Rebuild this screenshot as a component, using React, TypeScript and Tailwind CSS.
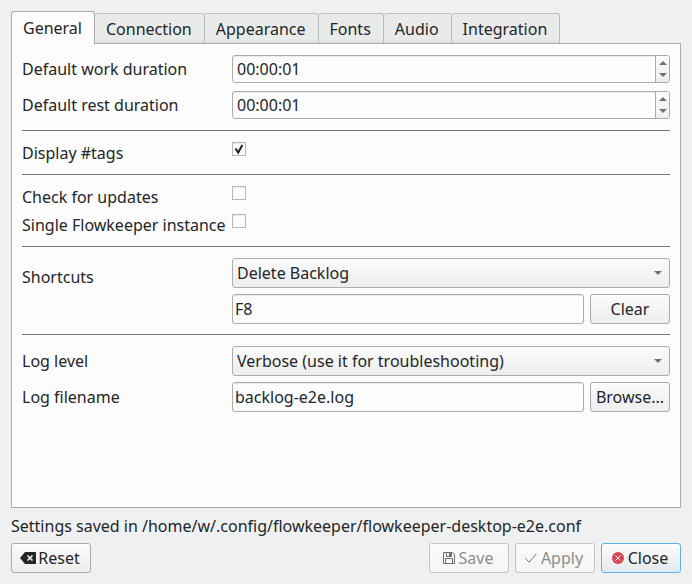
import { useState, type ReactNode } from "react";

const tabs = ["General", "Connection", "Appearance", "Fonts", "Audio", "Integration"];

const raised = "rounded-[3px] border bg-linear-to-b ";
const buttonBase = raised + "flex h-[30px] w-20 items-center justify-center whitespace-nowrap ";
const normalButton = buttonBase + "border-[#a9abac] from-[#fcfcfc] to-[#ededed]";
const disabledButton = buttonBase + "gap-1 border-[#c2c4c5] from-[#fbfbfb] to-[#f4f5f5] pr-0.5 text-[#8b8d8f]";
const textBox =
  "h-[30px] w-full min-w-0 flex-1 rounded-[3px] border border-[#a9abac] bg-[#fcfcfc] px-0.5 shadow-[inset_0_1px_0_#ececec] outline-none";

function Row({ id, label, children }: { id: string; label: string; children: ReactNode }) {
  return (
    <div className="flex h-[30px] items-center">
      <label htmlFor={id} className="w-[210px] shrink-0">{label}</label>
      <div className="flex min-w-0 flex-1 gap-1.5">{children}</div>
    </div>
  );
}

function Divider() {
  return <hr className="mt-1 mb-[5px] border-t border-[#747677]" />;
}

function Duration({ id, label }: { id: string; label: string }) {
  return (
    <Row id={id} label={label}>
      <div className="flex h-7 flex-1 overflow-hidden rounded-[3px] border border-[#a9abac] bg-[#fcfcfc] shadow-[inset_0_1px_0_#ececec]">
        <input id={id} defaultValue="00:00:01" className="min-w-0 flex-1 bg-transparent px-1 outline-none" />
        <div className="flex w-[14px] flex-col border-l border-[#a9abac] bg-linear-to-b from-[#fcfcfc] to-[#ededed] py-px">
          <button aria-label={label + " up"} className="flex flex-1 items-center justify-center">
            <svg width="8" height="4" viewBox="0 0 8 4" fill="#6f7173"><path d="M0 4 4 0l4 4z" /></svg>
          </button>
          <button aria-label={label + " down"} className="flex flex-1 items-center justify-center">
            <svg width="8" height="4" viewBox="0 0 8 4" fill="#6f7173"><path d="M0 0h8L4 4z" /></svg>
          </button>
        </div>
      </div>
    </Row>
  );
}

function Check({ id, label, initial = false }: { id: string; label: string; initial?: boolean }) {
  const [on, setOn] = useState(initial);
  return (
    <div className="flex h-[22px] items-start">
      <label htmlFor={id} className="w-[210px] shrink-0 whitespace-nowrap">{label}</label>
      <span className="relative h-3.5 w-3.5">
        <input
          id={id}
          type="checkbox"
          checked={on}
          onChange={(e) => setOn(e.target.checked)}
          className="block h-3.5 w-3.5 appearance-none border border-[#b7b8b9] bg-[#fcfcfc] shadow-[inset_0_1px_0_#ececec]"
        />
        {on && (
          <svg className="pointer-events-none absolute inset-0" width="14" height="14" viewBox="0 0 14 14" fill="none" stroke="#1b1e20" strokeWidth="2">
            <path d="M3.5 6.5 6.2 10.6 10.3 3" />
          </svg>
        )}
      </span>
    </div>
  );
}

function Dropdown({ id, value }: { id: string; value: string }) {
  return (
    <div className="relative flex-1">
      <select id={id} className={raised + "block h-[30px] w-full appearance-none border-[#a9abac] from-[#fcfcfc] to-[#ededed] pr-6 pl-1 outline-none"}>
        <option>{value}</option>
      </select>
      <svg className="pointer-events-none absolute top-[13px] right-2" width="8" height="4" viewBox="0 0 8 4" fill="#6f7173">
        <path d="M0 0h8L4 4z" />
      </svg>
    </div>
  );
}

export default function App() {
  return (
    <div className="flex min-h-screen flex-col bg-[#eff0f1] p-[11px] font-['Noto_Sans',sans-serif] text-[16px] leading-[22px] text-[#232627]">
      <div role="tablist" className="flex items-end">
        {tabs.map((tab, i) =>
          i === 0 ? (
            <button key={tab} role="tab" aria-selected="true" className="relative z-10 -mb-px h-[33px] rounded-t-[3px] border border-b-0 border-[#a9abac] bg-[#fcfcfc] pr-3 pl-[11px]">
              {tab}
            </button>
          ) : (
            <button key={tab} role="tab" aria-selected="false" className="h-[30px] rounded-t-[3px] border-t border-r border-[#bbbdbe] bg-linear-to-b from-[#e9ebeb] from-85% to-[#dfe1e1] pr-3 pl-[11px]">
              {tab}
            </button>
          )
        )}
      </div>

      <main role="tabpanel" className="flex flex-1 flex-col gap-1.5 border border-[#a9abac] bg-[#fcfcfc] p-2.5">
        <Duration id="work" label="Default work duration" />
        <Duration id="rest" label="Default rest duration" />
        <Divider />
        <Check id="tags" label="Display #tags" initial />
        <Divider />
        <Check id="updates" label="Check for updates" />
        <Check id="single" label="Single Flowkeeper instance" />
        <Divider />
        <div className="flex items-start">
          <label htmlFor="shortcut" className="w-[210px] shrink-0 pt-2">Shortcuts</label>
          <div className="flex min-w-0 flex-1 flex-col gap-1.5">
            <Dropdown id="shortcut" value="Delete Backlog" />
            <div className="flex gap-1.5">
              <input aria-label="Key sequence" defaultValue="F8" className={textBox} />
              <button className={normalButton}>Clear</button>
            </div>
          </div>
        </div>
        <Divider />
        <Row id="level" label="Log level">
          <Dropdown id="level" value="Verbose (use it for troubleshooting)" />
        </Row>
        <Row id="file" label="Log filename">
          <input id="file" defaultValue="backlog-e2e.log" className={textBox} />
          <button className={normalButton}>Browse...</button>
        </Row>
      </main>

      <p className="mt-[7px] mb-1.5">Settings saved in /home/w/.config/flowkeeper/flowkeeper-desktop-e2e.conf</p>

      <footer className="flex gap-1.5">
        <button className={normalButton + " mr-auto gap-0.5 pr-0.5"}>
          <svg width="16" height="12" viewBox="0 0 16 12">
            <path d="M0 6 5 0h11v12H5z" fill="#232627" />
            <path d="m7.5 3.5 5 5m0-5-5 5" stroke="#fcfcfc" strokeWidth="1.5" />
          </svg>
          Reset
        </button>
        <button disabled className={disabledButton}>
          <svg width="12" height="12" viewBox="0 0 12 12" fill="none" stroke="#6f7173">
            <path d="M.5.5h9l2 2v9H.5zM3.5.5v4h5v-4M2.5 11.5v-5h7v5" />
            <path d="M6 1h2v3H6z" fill="#6f7173" stroke="none" />
          </svg>
          Save
        </button>
        <button disabled className={disabledButton}>
          <svg width="12" height="10" viewBox="0 0 12 10" fill="none" stroke="#6f7173">
            <path d="m.5 5.5 3.5 3.5L11.5.9" />
          </svg>
          Apply
        </button>
        <button className={buttonBase + "gap-1 border-[#5eb5e2] from-[#fcfcfc] to-[#e3e9ed] pr-0.5"}>
          <svg width="12" height="12" viewBox="0 0 12 12">
            <circle cx="6" cy="6" r="6" fill="#da4453" />
            <path d="m3.5 3.5 5 5m0-5-5 5" stroke="#fcfcfc" />
          </svg>
          Close
        </button>
      </footer>
    </div>
  );
}
